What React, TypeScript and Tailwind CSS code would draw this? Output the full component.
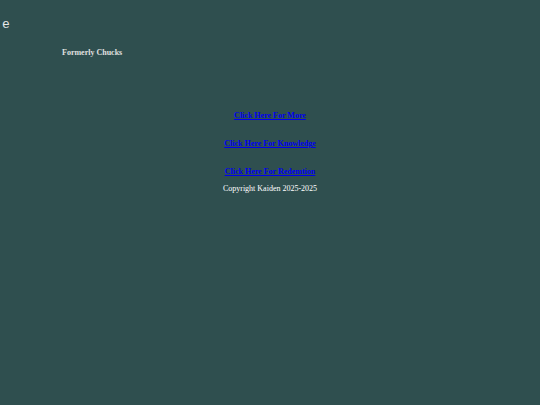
export default function App() {
  return (
    <div className="w-[540px] h-[405px] overflow-hidden bg-[#2f4f4f] font-['Liberation_Serif',serif] relative">
      {/* clipped heading remnant */}
      <div className="pt-[18px] pl-[2px] h-[48px] text-[13px] leading-[14px] text-[#e8e8e8] font-['Liberation_Mono',monospace]">
        e
      </div>
      <div className="pl-[62px] text-[8px] leading-[10px] font-bold text-[#e0e0e0]">
        Formerly Chucks
      </div>
      <div className="flex flex-col items-center mt-[53px] text-[8px] leading-[10px]">
        <a href="#" className="font-bold text-[#0000ee] underline">
          Click Here For More
        </a>
        <a href="#" className="font-bold text-[#0000ee] underline mt-[18px]">
          Click Here For Knowledge
        </a>
        <a href="#" className="font-bold text-[#0000ee] underline mt-[18px]">
          Click Here For Redemtion
        </a>
        <p className="text-white mt-[7px]">Copyright Kaiden 2025-2025</p>
      </div>
    </div>
  );
}
